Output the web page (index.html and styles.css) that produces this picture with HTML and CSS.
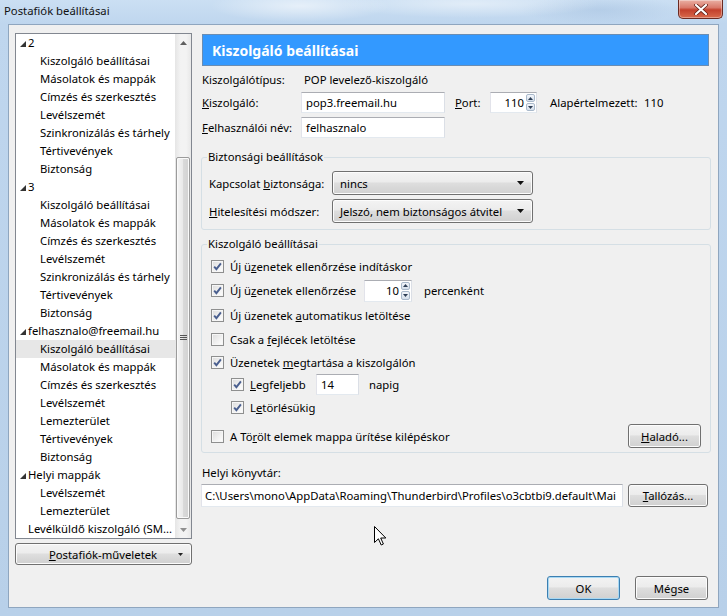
FILE: index.html
```html
<!DOCTYPE html>
<html lang="hu">
<head>
<meta charset="utf-8">
<title>Postafiók beállításai</title>
<link rel="stylesheet" href="styles.css">
</head>
<body>
<div class="window">
  <div class="titlebar">
    <span class="title">Postafiók beállításai</span>
    <span class="close"><svg width="14" height="11" viewBox="0 0 14 11"><path d="M2 1 L12 10 M12 1 L2 10" stroke="#5a1a12" stroke-width="3.6" stroke-linecap="round"/><path d="M2 1 L12 10 M12 1 L2 10" stroke="#fff" stroke-width="2.2" stroke-linecap="round"/></svg></span>
  </div>
  <div class="client">
    <div class="main">
      <div class="leftcol">
        <div class="tree">
          <div class="tree-list">
            <div class="ti root"><svg class="tri" width="6" height="6" viewBox="0 0 6 6"><path d="M6 0 V6 H0 Z" fill="#333"/></svg>2</div>
            <div class="ti">Kiszolgáló beállításai</div>
            <div class="ti">Másolatok és mappák</div>
            <div class="ti">Címzés és szerkesztés</div>
            <div class="ti">Levélszemét</div>
            <div class="ti">Szinkronizálás és tárhely</div>
            <div class="ti">Tértivevények</div>
            <div class="ti">Biztonság</div>
            <div class="ti root"><svg class="tri" width="6" height="6" viewBox="0 0 6 6"><path d="M6 0 V6 H0 Z" fill="#333"/></svg>3</div>
            <div class="ti">Kiszolgáló beállításai</div>
            <div class="ti">Másolatok és mappák</div>
            <div class="ti">Címzés és szerkesztés</div>
            <div class="ti">Levélszemét</div>
            <div class="ti">Szinkronizálás és tárhely</div>
            <div class="ti">Tértivevények</div>
            <div class="ti">Biztonság</div>
            <div class="ti root"><svg class="tri" width="6" height="6" viewBox="0 0 6 6"><path d="M6 0 V6 H0 Z" fill="#333"/></svg>felhasznalo@freemail.hu</div>
            <div class="ti sel">Kiszolgáló beállításai</div>
            <div class="ti">Másolatok és mappák</div>
            <div class="ti">Címzés és szerkesztés</div>
            <div class="ti">Levélszemét</div>
            <div class="ti">Lemezterület</div>
            <div class="ti">Tértivevények</div>
            <div class="ti">Biztonság</div>
            <div class="ti root"><svg class="tri" width="6" height="6" viewBox="0 0 6 6"><path d="M6 0 V6 H0 Z" fill="#333"/></svg>Helyi mappák</div>
            <div class="ti">Levélszemét</div>
            <div class="ti">Lemezterület</div>
            <div class="ti leaf">Levélküldő kiszolgáló (SM...</div>
          </div>
          <div class="vscroll">
            <div class="sb-arrow"><svg width="7" height="4" viewBox="0 0 7 4"><path d="M0 4 L3.5 0 L7 4 Z" fill="#606060"/></svg></div>
            <div class="sb-track">
              <div class="sb-thumb"><svg width="7" height="6" viewBox="0 0 7 6"><path d="M0 0.5 H7 M0 2.5 H7 M0 4.5 H7" stroke="#555" stroke-width="1"/></svg></div>
            </div>
            <div class="sb-arrow"><svg width="7" height="4" viewBox="0 0 7 4"><path d="M0 0 L3.5 4 L7 0 Z" fill="#909090"/></svg></div>
          </div>
        </div>
        <div class="btn acct-btn"><span class="acct-label"><u>P</u>ostafiók-műveletek</span><svg class="acct-arr" width="5" height="3" viewBox="0 0 5 3"><path d="M0 0 H5 L2.5 3 Z" fill="#222"/></svg></div>
      </div>

      <div class="rightcol">
        <div class="header">Kiszolgáló beállításai</div>

        <div class="frow type">
          <span class="flabel">Kiszolgálótípus:</span>
          <span class="value">POP levelező-kiszolgáló</span>
        </div>
        <div class="frow fld">
          <span class="flabel"><u>K</u>iszolgáló:</span>
          <span class="input w144">pop3.freemail.hu</span>
          <span class="port-label"><u>P</u>ort:</span>
          <span class="spin port"><span class="val">110</span><span class="arrows"><span><svg width="5" height="3" viewBox="0 0 5 3"><path d="M0 3 L2.5 0 L5 3 Z" fill="#2d3e55"/></svg></span><span><svg width="5" height="3" viewBox="0 0 5 3"><path d="M0 0 L2.5 3 L5 0 Z" fill="#2d3e55"/></svg></span></span></span>
          <span class="def-label">Alapértelmezett:</span>
          <span>110</span>
        </div>
        <div class="frow fld">
          <span class="flabel"><u>F</u>elhasználói név:</span>
          <span class="input w144">felhasznalo</span>
        </div>

        <fieldset class="group g1">
          <legend>Biztonsági beállítások</legend>
          <div class="srow">
            <span class="slabel">Kapcsolat <u>b</u>iztonsága:</span>
            <span class="btn select"><span>nincs</span><svg width="7" height="4" viewBox="0 0 7 4"><path d="M0 0 H7 L3.5 4 Z" fill="#111"/></svg></span>
          </div>
          <div class="srow">
            <span class="slabel"><u>H</u>itelesítési módszer:</span>
            <span class="btn select"><span>Jelszó, nem biztonságos átvitel</span><svg width="7" height="4" viewBox="0 0 7 4"><path d="M0 0 H7 L3.5 4 Z" fill="#111"/></svg></span>
          </div>
        </fieldset>

        <fieldset class="group g2">
          <legend>Kiszolgáló beállításai</legend>
          <div class="crow h24">
            <span class="cb"><svg viewBox="0 0 11 11"><path d="M2.2 5.6 L4.4 8.2 L8.9 2.4" fill="none" stroke="#4a5f8f" stroke-width="1.9"/></svg></span>
            <span>Új ü<u>z</u>enetek ellenőrzése indításkor</span>
          </div>
          <div class="crow h25">
            <span class="cb"><svg viewBox="0 0 11 11"><path d="M2.2 5.6 L4.4 8.2 L8.9 2.4" fill="none" stroke="#4a5f8f" stroke-width="1.9"/></svg></span>
            <span class="lbl-fixed">Új ü<u>z</u>enetek ellenőrzése</span>
            <span class="spin mins"><span class="val">10</span><span class="arrows"><span><svg width="5" height="3" viewBox="0 0 5 3"><path d="M0 3 L2.5 0 L5 3 Z" fill="#2d3e55"/></svg></span><span><svg width="5" height="3" viewBox="0 0 5 3"><path d="M0 0 L2.5 3 L5 0 Z" fill="#2d3e55"/></svg></span></span></span>
            <span class="after">percenként</span>
          </div>
          <div class="crow h24">
            <span class="cb"><svg viewBox="0 0 11 11"><path d="M2.2 5.6 L4.4 8.2 L8.9 2.4" fill="none" stroke="#4a5f8f" stroke-width="1.9"/></svg></span>
            <span>Új üzenetek <u>a</u>utomatikus letöltése</span>
          </div>
          <div class="crow h24">
            <span class="cb"></span>
            <span>Csak a <u>f</u>ejlécek letöltése</span>
          </div>
          <div class="crow h22">
            <span class="cb"><svg viewBox="0 0 11 11"><path d="M2.2 5.6 L4.4 8.2 L8.9 2.4" fill="none" stroke="#4a5f8f" stroke-width="1.9"/></svg></span>
            <span>Üzenetek <u>m</u>egtartása a kiszolgálón</span>
          </div>
          <div class="crow h22 indent">
            <span class="cb"><svg viewBox="0 0 11 11"><path d="M2.2 5.6 L4.4 8.2 L8.9 2.4" fill="none" stroke="#4a5f8f" stroke-width="1.9"/></svg></span>
            <span class="lbl-days"><u>L</u>egfeljebb</span>
            <span class="input days">14</span>
            <span class="after">napig</span>
          </div>
          <div class="crow h25 indent">
            <span class="cb"><svg viewBox="0 0 11 11"><path d="M2.2 5.6 L4.4 8.2 L8.9 2.4" fill="none" stroke="#4a5f8f" stroke-width="1.9"/></svg></span>
            <span>L<u>e</u>törlésükig</span>
          </div>
          <div class="crow h32">
            <span class="cb"></span>
            <span>A Tö<u>r</u>ölt elemek mappa ürítése kilépéskor</span>
            <span class="btn adv"><span><u>H</u>aladó...</span></span>
          </div>
        </fieldset>

        <div class="dir-label">Helyi könyvtár:</div>
        <div class="dir-row">
          <span class="input path">C:\Users\mono\AppData\Roaming\Thunderbird\Profiles\o3cbtbi9.default\Mai</span>
          <span class="btn browse"><span><u>T</u>allózás...</span></span>
        </div>
      </div>
    </div>

    <div class="footer">
      <span class="btn dlg ok">OK</span>
      <span class="btn dlg">Mégse</span>
    </div>
  </div>
  <svg class="cursor" width="13" height="20" viewBox="0 0 13 20"><path d="M0.5 0.5 L0.5 16.5 L4.4 12.8 L7.2 19 L9.4 18 L6.7 12 L11.8 12 Z" fill="#fff" stroke="#000" stroke-width="1" stroke-linejoin="miter"/></svg>
</div>
</body>
</html>
```

FILE: styles.css
```css
* { box-sizing: border-box; }

body {
  margin: 0;
  font-family: "Noto Sans", "Open Sans", sans-serif;
  font-size: 11.3px;
  font-weight: 400;
  color: #000;
  background: #bcd3ea;
}

u { text-decoration: underline; text-underline-offset: 1px; }

.window {
  position: relative;
  width: 727px;
  height: 616px;
  padding: 0 8px 8px;
  display: flex;
  flex-direction: column;
  overflow: hidden;
  background:
    radial-gradient(ellipse 90px 16px at 300px 6px, rgba(255,255,255,0.55), rgba(255,255,255,0) 100%),
    radial-gradient(ellipse 130px 14px at 470px 4px, rgba(255,255,255,0.45), rgba(255,255,255,0) 100%),
    radial-gradient(ellipse 80px 14px at 600px 10px, rgba(150,180,215,0.35), rgba(150,180,215,0) 100%),
    linear-gradient(180deg, #cbdff3 0, #bfd6ee 24px, #b8d0e9 100%);
}

.titlebar {
  height: 24px;
  margin: 0 -8px;
  padding: 0 4px;
  display: flex;
  justify-content: space-between;
  align-items: flex-start;
}

.title {
  line-height: 22px;
  color: #111;
}

.close {
  width: 45px;
  height: 19px;
  border: 1px solid #6b2a22;
  border-top: none;
  border-radius: 0 0 5px 5px;
  background: linear-gradient(180deg, #eab0a4 0, #d9796a 42%, #c3402c 55%, #d86a4c 100%);
  box-shadow: inset 0 0 0 1px rgba(255,255,255,0.35);
  display: flex;
  align-items: center;
  justify-content: center;
}

.client {
  flex: 1;
  display: flex;
  flex-direction: column;
  background: #f0f0f0;
  border: 1px solid #8fa6bf;
  padding: 8px 7px 7px 6px;
}

.main {
  display: flex;
  gap: 9px;
}

/* ---------- left column ---------- */
.leftcol {
  width: 177px;
  display: flex;
  flex-direction: column;
  gap: 4px;
}

.tree {
  height: 506px;
  border: 1px solid #828790;
  background: #fff;
  display: flex;
}

.tree-list {
  flex: 1;
  overflow: hidden;
}

.ti {
  height: 18px;
  line-height: 18px;
  white-space: nowrap;
  padding-left: 24px;
}

.ti.root {
  padding-left: 4px;
  display: flex;
  align-items: center;
  gap: 2px;
}

.ti.root .tri { margin-top: 1px; }

.ti.leaf { padding-left: 12px; }

.ti.sel { background: #e7e7e7; }

.vscroll {
  width: 16px;
  display: flex;
  flex-direction: column;
  background: linear-gradient(90deg, #e5e5e5, #f3f3f3 35%, #f3f3f3 70%, #e8e8e8);
}

.sb-arrow {
  height: 17px;
  display: flex;
  align-items: center;
  justify-content: center;
}

.sb-track { flex: 1; }

.sb-thumb {
  margin: 106px 1px 0;
  height: 362px;
  border: 1px solid #9b9b9b;
  border-radius: 2px;
  background: linear-gradient(90deg, #f5f5f5, #e9e9e9 50%, #dadada 51%, #d2d2d2);
  box-shadow: inset 0 0 0 1px #fafafa;
  display: flex;
  align-items: center;
  justify-content: center;
}

/* ---------- buttons ---------- */
.btn {
  color: #000;
  font-weight: 400;
  border: 1px solid #707070;
  border-radius: 3px;
  background: linear-gradient(180deg, #f3f3f3 0, #ececec 45%, #dedede 50%, #d0d0d0 100%);
  box-shadow: inset 0 0 0 1px #fcfcfc;
  display: flex;
  align-items: center;
  justify-content: center;
  white-space: nowrap;
}

.acct-btn {
  height: 22px;
  padding: 0 8px 0 12px;
}

.acct-label {
  flex: 1;
  text-align: center;
}

/* ---------- right column ---------- */
.rightcol {
  width: 510px;
  display: flex;
  flex-direction: column;
}

.header {
  margin: 1px 2px 0 1px;
  height: 32px;
  background: #3399ff;
  border: 1px solid #6a8db3;
  color: #fff;
  font-weight: bold;
  font-size: 14px;
  display: flex;
  align-items: center;
  padding-left: 9px;
}

.frow {
  display: flex;
  align-items: center;
  margin-left: 1px;
}

.frow.type { height: 18px; margin-top: 4px; }
.frow.fld { height: 21px; margin-top: 4px; }

.flabel { width: 99px; }
.value { padding-left: 3px; }

.input {
  height: 21px;
  border: 1px solid;
  border-color: #abadb3 #dbdfe6 #e3e9ef #e2e3ea;
  background: #fff;
  padding: 0 4px;
  display: flex;
  align-items: center;
  white-space: nowrap;
  overflow: hidden;
}

.w144 { width: 144px; }

.port-label { margin-left: 10px; width: 35px; }
.def-label { margin-left: 13px; width: 94px; }

.spin {
  display: flex;
  height: 21px;
  border: 1px solid;
  border-color: #abadb3 #dbdfe6 #e3e9ef #e2e3ea;
  background: #fff;
}

.spin.port { width: 47px; }
.spin.mins { width: 48px; height: 22px; }

.spin .val {
  flex: 1;
  text-align: right;
  padding-right: 2px;
  align-self: center;
}

.spin .arrows {
  width: 10px;
  display: flex;
  flex-direction: column;
  gap: 1px;
  padding: 1px 1px 1px 0;
}

.spin .arrows > span {
  flex: 1;
  border: 1px solid #a9b9cb;
  border-radius: 2px;
  background: linear-gradient(180deg, #f3f6fb, #d5dfeb);
  display: flex;
  align-items: center;
  justify-content: center;
}

/* ---------- group boxes ---------- */
.group {
  margin: 12px 0 0;
  padding: 7px 7px 6px 7px;
  border: 1px solid #d5dfe5;
  border-radius: 3px;
  min-width: 0;
}

.group legend {
  padding: 0 1px;
  margin-left: -2px;
  line-height: 14px;
}

.g2 {
  margin-top: 7px;
  padding: 3px 9px 0 7px;
}

.srow {
  display: flex;
  align-items: center;
  height: 24px;
}

.srow + .srow { margin-top: 4px; }

.slabel { width: 123px; }

.select {
  width: 201px;
  height: 24px;
  justify-content: space-between;
  padding: 0 8px 0 7px;
}

.crow {
  display: flex;
  align-items: center;
  margin-left: 2px;
}

.h22 { height: 22px; }
.h24 { height: 24px; }
.h25 { height: 25px; }
.h32 { height: 32px; }

.crow.indent { margin-left: 22px; }

.cb {
  width: 13px;
  height: 13px;
  flex: none;
  margin-right: 6px;
  border: 1px solid #8e8f8f;
  background: linear-gradient(135deg, #dcdcdc, #f2f2f2 60%, #ffffff);
  box-shadow: inset 0 0 0 1px #f6f6f6;
  display: flex;
}

.cb svg { width: 11px; height: 11px; }

.lbl-fixed { width: 134px; }
.lbl-days { width: 66px; }

.after { margin-left: 12px; }
.indent .after { margin-left: 10px; }

.input.days { width: 43px; }

.adv {
  margin-left: auto;
  width: 73px;
  height: 24px;
}

.dir-label {
  margin: 13px 0 0 1px;
  line-height: 14px;
}

.dir-row {
  display: flex;
  gap: 5px;
  margin-top: 4px;
  padding-right: 3px;
}

.input.path {
  width: 422px;
  height: 23px;
  padding: 0 3px;
}

.browse {
  width: 80px;
  height: 23px;
}

/* ---------- footer ---------- */
.footer {
  margin-top: auto;
  display: flex;
  justify-content: flex-end;
  gap: 15px;
  padding-right: 3px;
}

.dlg {
  width: 73px;
  height: 24px;
}

.dlg.ok {
  border-color: #3c7fb1;
  box-shadow: inset 0 0 0 1px #a8d8f3;
}

.cursor {
  position: absolute;
  left: 374px;
  top: 526px;
}
```
